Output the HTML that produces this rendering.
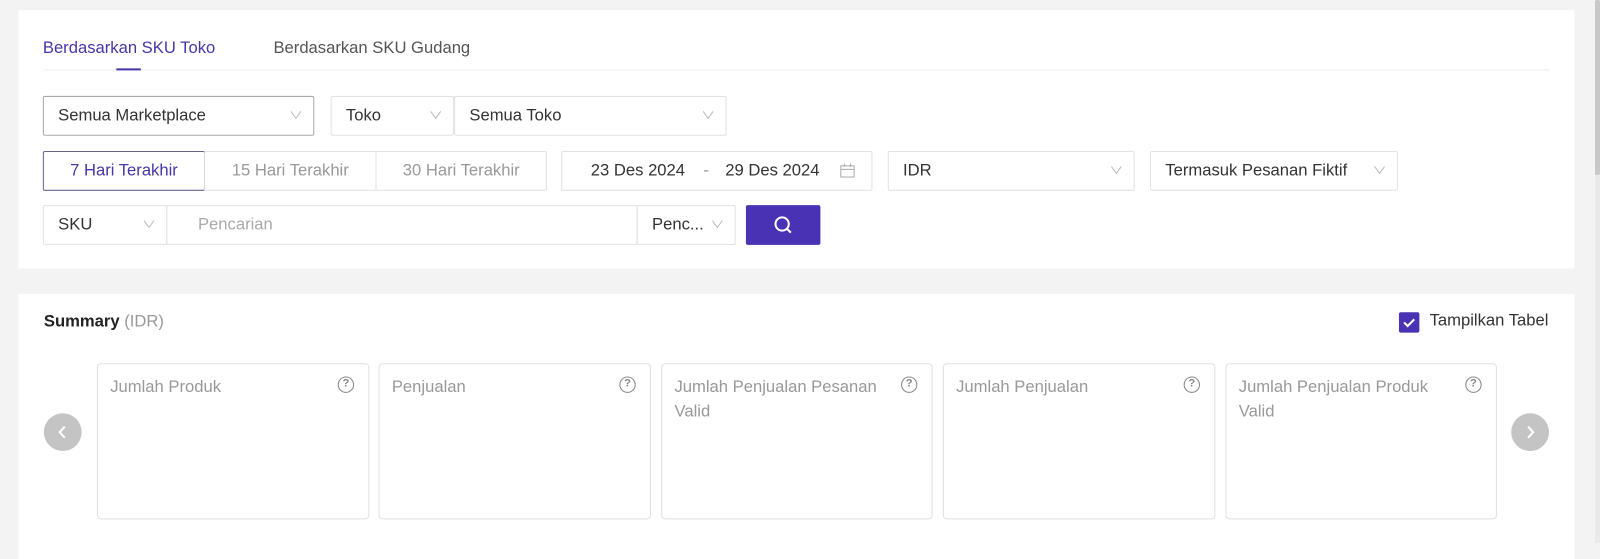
<!DOCTYPE html>
<html><head><style>
*{box-sizing:border-box;margin:0;padding:0}
body{width:1600px;height:543px;background:#f3f3f3;font-family:"Liberation Sans",sans-serif;font-size:16.3px;color:#333;position:relative;overflow:hidden}
#w{position:absolute;left:0;top:0;width:1568px;height:532px;transform:scale(1.0204);transform-origin:0 0}
.a{position:absolute}
.p{background:#fff}
.b{position:absolute;border:1px solid #e2e2e2;border-radius:2px;background:#fff;display:flex;align-items:center;padding-left:14px;height:39px;white-space:nowrap}
.chev{position:absolute;right:12px;top:12px;width:10px;height:10px}
.card{position:absolute;top:356px;height:153px;border:1px solid #e0e0e0;border-radius:4px;background:#fff;padding:10px 12px;color:#999;line-height:24px}
.q{position:absolute;right:14px;top:12px;width:16px;height:16px;border:1.4px solid #888;border-radius:50%;font-size:11px;line-height:13px;text-align:center;color:#888;font-weight:bold}
</style></head><body>
<svg width="0" height="0" style="position:absolute"><defs><symbol id="cv" viewBox="0 0 10 10"><path d="M0 2 L5 9 L10 2" fill="none" stroke="#bbb" stroke-width="1"/></symbol></defs></svg>
<div class="a" style="left:1595px;top:0;width:5px;height:543px;background:#eaeaea"></div>
<div class="a" style="left:1595px;top:0;width:5px;height:175px;background:#c8c8c8;border-radius:2px"></div>
<div id="w">
<div class="a p" style="left:18px;top:10px;width:1525px;height:253px"></div>
<div class="a p" style="left:18px;top:288px;width:1525px;height:260px"></div>

<div class="a" style="left:42px;top:38px;color:#4a36a6">Berdasarkan SKU Toko</div>
<div class="a" style="left:268px;top:38px;color:#555">Berdasarkan SKU Gudang</div>
<div class="a" style="left:42px;top:68px;width:1477px;height:1px;background:#eee"></div>
<div class="a" style="left:114px;top:67px;width:24px;height:2px;background:#4a36a6"></div>

<div class="b" style="left:42px;top:94px;width:266px;border-color:#aaa">Semua Marketplace<svg class="chev"><use href="#cv"/></svg></div>
<div class="b" style="left:324px;top:94px;width:121px">Toko<svg class="chev"><use href="#cv"/></svg></div>
<div class="b" style="left:445px;top:94px;width:267px">Semua Toko<svg class="chev"><use href="#cv"/></svg></div>

<div class="b" style="left:42px;top:148px;width:159px;border-color:#6a6390;color:#4a36a6;justify-content:center;padding:0">7 Hari Terakhir</div>
<div class="b" style="left:200px;top:148px;width:169px;color:#999;justify-content:center;padding:0">15 Hari Terakhir</div>
<div class="b" style="left:368px;top:148px;width:168px;color:#999;justify-content:center;padding:0">30 Hari Terakhir</div>
<div class="b" style="left:550px;top:148px;width:305px;padding-left:28px">23 Des 2024<span style="margin:0 16px 0 18px;color:#999">-</span>29 Des 2024
<svg style="position:absolute;right:16px;top:11px" width="15" height="15" viewBox="0 0 15 15"><rect x="1" y="2.5" width="13" height="11" fill="none" stroke="#aaa"/><path d="M1 6h13M4.5 0.5v3M10.5 0.5v3" stroke="#aaa"/></svg></div>
<div class="b" style="left:870px;top:148px;width:242px">IDR<svg class="chev"><use href="#cv"/></svg></div>
<div class="b" style="left:1127px;top:148px;width:243px">Termasuk Pesanan Fiktif<svg class="chev"><use href="#cv"/></svg></div>

<div class="b" style="left:42px;top:201px;width:122px">SKU<svg class="chev"><use href="#cv"/></svg></div>
<div class="b" style="left:163px;top:201px;width:462px;color:#aaa;padding-left:30px">Pencarian</div>
<div class="b" style="left:624px;top:201px;width:97px">Penc...<svg class="chev"><use href="#cv"/></svg></div>
<div class="a" style="left:731px;top:201px;width:73px;height:39px;background:#4a32b4;border-radius:2px">
<svg style="position:absolute;left:27px;top:10px" width="20" height="20" viewBox="0 0 20 20"><circle cx="8.5" cy="8.5" r="6.5" fill="none" stroke="#fff" stroke-width="2"/><path d="M13 13l4 4" stroke="#fff" stroke-width="2"/></svg></div>

<div class="a" style="left:43px;top:306px;font-weight:bold;color:#222">Summary <span style="font-weight:normal;color:#999">(IDR)</span></div>
<div class="a" style="left:1371px;top:306px;width:20px;height:20px;background:#4a32b4;border-radius:2px">
<svg width="20" height="20" viewBox="0 0 20 20"><path d="M5 10l3.5 3.5L15 7" fill="none" stroke="#fff" stroke-width="2"/></svg></div>
<div class="a" style="left:1401px;top:305px">Tampilkan Tabel</div>

<div class="a" style="left:43px;top:405px;width:37px;height:37px;border-radius:50%;background:#c4c4c4"><svg width="37" height="37" viewBox="0 0 37 37"><path d="M20.5 13l-5 5.5 5 5.5" fill="none" stroke="#fff" stroke-width="2"/></svg></div>
<div class="a" style="left:1481px;top:405px;width:37px;height:37px;border-radius:50%;background:#c4c4c4"><svg width="37" height="37" viewBox="0 0 37 37"><path d="M16.5 13l5 5.5-5 5.5" fill="none" stroke="#fff" stroke-width="2"/></svg></div>

<div class="card" style="left:95px;width:267px">Jumlah Produk<div class="q">?</div></div>
<div class="card" style="left:371px;width:267px">Penjualan<div class="q">?</div></div>
<div class="card" style="left:648px;width:266px">Jumlah Penjualan Pesanan<br>Valid<div class="q">?</div></div>
<div class="card" style="left:924px;width:267px">Jumlah Penjualan<div class="q">?</div></div>
<div class="card" style="left:1201px;width:266px">Jumlah Penjualan Produk<br>Valid<div class="q">?</div></div>
</div>
</body></html>
